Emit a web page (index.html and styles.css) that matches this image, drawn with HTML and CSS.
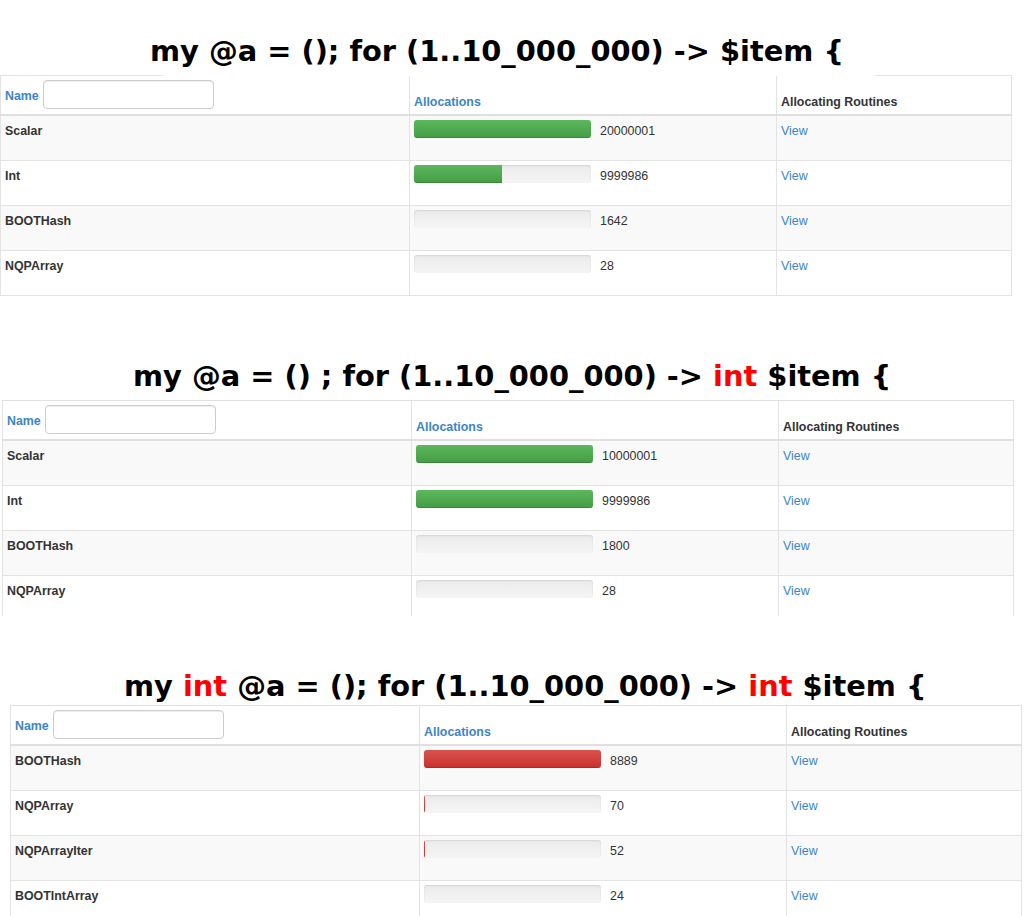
FILE: index.html
```html
<!DOCTYPE html>
<html lang="en">
<head>
<meta charset="utf-8">
<title>Allocations</title>
<link rel="stylesheet" href="styles.css">
</head>
<body>
<section class="panel panel-1">
  <h2 class="title">my @a = (); for (1..10_000_000) -&gt; $item {</h2>
  <div class="cutline"><span class="seg seg-left"></span><span class="seg seg-right"></span></div>
  <div class="gtable no-top">
    <div class="row head">
      <div class="cell"><div class="filter"><span class="link-label">Name</span><input class="filter-input" type="text"></div></div>
      <div class="cell hcell"><span class="link-label">Allocations</span></div>
      <div class="cell hcell"><span class="plain-label">Allocating Routines</span></div>
    </div>
    <div class="row odd first">
      <div class="cell"><span class="type">Scalar</span></div>
      <div class="cell"><div class="alloc"><div class="bar"><div class="fill green" style="width:100%"></div></div><span class="num">20000001</span></div></div>
      <div class="cell"><a class="view" href="#">View</a></div>
    </div>
    <div class="row">
      <div class="cell"><span class="type">Int</span></div>
      <div class="cell"><div class="alloc"><div class="bar"><div class="fill green" style="width:49.99993%"></div></div><span class="num">9999986</span></div></div>
      <div class="cell"><a class="view" href="#">View</a></div>
    </div>
    <div class="row odd">
      <div class="cell"><span class="type">BOOTHash</span></div>
      <div class="cell"><div class="alloc"><div class="bar"><div class="fill green" style="width:0.0082%"></div></div><span class="num">1642</span></div></div>
      <div class="cell"><a class="view" href="#">View</a></div>
    </div>
    <div class="row last">
      <div class="cell"><span class="type">NQPArray</span></div>
      <div class="cell"><div class="alloc"><div class="bar"><div class="fill green" style="width:0.00014%"></div></div><span class="num">28</span></div></div>
      <div class="cell"><a class="view" href="#">View</a></div>
    </div>
  </div>
</section>

<section class="panel panel-2">
  <h2 class="title">my @a = () ; for (1..10_000_000) -&gt; <span class="kw">int</span> $item {</h2>
  <div class="clip clip-2">
    <div class="gtable">
      <div class="row head">
        <div class="cell"><div class="filter"><span class="link-label">Name</span><input class="filter-input" type="text"></div></div>
        <div class="cell hcell"><span class="link-label">Allocations</span></div>
        <div class="cell hcell"><span class="plain-label">Allocating Routines</span></div>
      </div>
      <div class="row odd first">
        <div class="cell"><span class="type">Scalar</span></div>
        <div class="cell"><div class="alloc"><div class="bar"><div class="fill green" style="width:100%"></div></div><span class="num">10000001</span></div></div>
        <div class="cell"><a class="view" href="#">View</a></div>
      </div>
      <div class="row">
        <div class="cell"><span class="type">Int</span></div>
        <div class="cell"><div class="alloc"><div class="bar"><div class="fill green" style="width:99.99985%"></div></div><span class="num">9999986</span></div></div>
        <div class="cell"><a class="view" href="#">View</a></div>
      </div>
      <div class="row odd">
        <div class="cell"><span class="type">BOOTHash</span></div>
        <div class="cell"><div class="alloc"><div class="bar"><div class="fill green" style="width:0.018%"></div></div><span class="num">1800</span></div></div>
        <div class="cell"><a class="view" href="#">View</a></div>
      </div>
      <div class="row">
        <div class="cell"><span class="type">NQPArray</span></div>
        <div class="cell"><div class="alloc"><div class="bar"><div class="fill green" style="width:0.00028%"></div></div><span class="num">28</span></div></div>
        <div class="cell"><a class="view" href="#">View</a></div>
      </div>
    </div>
  </div>
</section>

<section class="panel panel-3">
  <h2 class="title">my <span class="kw">int</span> @a = (); for (1..10_000_000) -&gt; <span class="kw">int</span> $item {</h2>
  <div class="gtable">
    <div class="row head">
      <div class="cell"><div class="filter"><span class="link-label">Name</span><input class="filter-input" type="text"></div></div>
      <div class="cell hcell"><span class="link-label">Allocations</span></div>
      <div class="cell hcell"><span class="plain-label">Allocating Routines</span></div>
    </div>
    <div class="row odd first">
      <div class="cell"><span class="type">BOOTHash</span></div>
      <div class="cell"><div class="alloc"><div class="bar"><div class="fill red" style="width:100%"></div></div><span class="num">8889</span></div></div>
      <div class="cell"><a class="view" href="#">View</a></div>
    </div>
    <div class="row">
      <div class="cell"><span class="type">NQPArray</span></div>
      <div class="cell"><div class="alloc"><div class="bar"><div class="fill red" style="width:0.7875%"></div></div><span class="num">70</span></div></div>
      <div class="cell"><a class="view" href="#">View</a></div>
    </div>
    <div class="row odd">
      <div class="cell"><span class="type">NQPArrayIter</span></div>
      <div class="cell"><div class="alloc"><div class="bar"><div class="fill red" style="width:0.585%"></div></div><span class="num">52</span></div></div>
      <div class="cell"><a class="view" href="#">View</a></div>
    </div>
    <div class="row">
      <div class="cell"><span class="type">BOOTIntArray</span></div>
      <div class="cell"><div class="alloc"><div class="bar"><div class="fill red" style="width:0.27%"></div></div><span class="num">24</span></div></div>
      <div class="cell"><a class="view" href="#">View</a></div>
    </div>
  </div>
</section>
</body>
</html>
```

FILE: styles.css
```css
html {
  overflow: hidden;
  background: #fff;
}

body {
  margin: 0;
  background: #fff;
  font-family: "Liberation Sans", Arial, sans-serif;
  font-size: 12.4px;
  color: #333;
}

.title {
  margin: 0;
  height: 34px;
  font-family: "DejaVu Sans", sans-serif;
  font-weight: bold;
  font-size: 28.85px;
  line-height: 34px;
  color: #000;
  white-space: nowrap;
}

.kw {
  color: #ff0000;
}

.panel-1 {
  margin-left: 0;
}
.panel-1 .title {
  margin-top: 34px;
  margin-bottom: 7px;
  padding-left: 150px;
}

.panel-2 {
  margin-left: 2px;
}
.panel-2 .title {
  margin-top: 63px;
  margin-bottom: 7px;
  padding-left: 131px;
}

.panel-3 {
  margin-left: 10px;
}
.panel-3 .title {
  margin-top: 53px;
  margin-bottom: 2px;
  padding-left: 114px;
}

.cutline {
  display: flex;
  justify-content: space-between;
  width: 1012px;
  height: 1px;
}
.seg {
  display: block;
  height: 1px;
  background: #e3e3e3;
}
.seg-left {
  width: 163px;
}
.seg-right {
  width: 137px;
}

.clip-2 {
  height: 216px;
  overflow: hidden;
}

.gtable {
  width: 1012px;
  border-top: 1px solid #e0e0e0;
}
.gtable.no-top {
  border-top: none;
}

.row {
  display: grid;
  grid-template-columns: 409px 367px 236px;
  border-top: 1px solid #e3e3e3;
}
.row.head {
  border-top: none;
  border-bottom: 2px solid #e0e0e0;
}
.row.first {
  border-top: none;
}
.row.last {
  border-bottom: 1px solid #e3e3e3;
}
.row.odd {
  background: #f9f9f9;
}

.cell {
  box-sizing: border-box;
  border-left: 1px solid #e3e3e3;
  padding: 4px 4px 18px 4px;
  line-height: 22px;
  min-width: 0;
}
.cell:last-child {
  border-right: 1px solid #e3e3e3;
}

.head .cell {
  padding: 4px 4px 5px 4px;
  line-height: 16px;
}
.head .hcell {
  display: flex;
  align-items: flex-end;
  padding-bottom: 4px;
}

.filter {
  display: flex;
  align-items: flex-start;
  gap: 4px;
}
.filter .link-label {
  margin-top: 8px;
}

.filter-input {
  box-sizing: border-box;
  width: 171px;
  height: 29px;
  margin: 0;
  padding: 4px 8px;
  border: 1px solid #cccccc;
  border-radius: 4px;
  background: #fff;
  box-shadow: inset 0 1px 1px rgba(0, 0, 0, 0.075);
  font-family: "Liberation Sans", Arial, sans-serif;
  font-size: 12.4px;
}

.link-label {
  font-weight: bold;
  color: #3c85c6;
}
.plain-label {
  font-weight: bold;
  color: #333;
}

.type {
  font-weight: bold;
  color: #333;
}

.alloc {
  display: flex;
  align-items: flex-start;
  gap: 9px;
}

.bar {
  width: 177px;
  height: 18px;
  border-radius: 3px;
  overflow: hidden;
  background: linear-gradient(to bottom, #ebebeb, #f5f5f5);
  box-shadow: inset 0 1px 2px rgba(0, 0, 0, 0.1);
  display: flex;
}
.fill {
  height: 100%;
  box-shadow: inset 0 -1px 0 rgba(0, 0, 0, 0.15);
}
.fill.green {
  background: linear-gradient(to bottom, #5cb85c, #449d44);
}
.fill.red {
  background: linear-gradient(to bottom, #d9534f, #c9302c);
}

.num {
  color: #333;
}

.view {
  color: #3c85c6;
  text-decoration: none;
}
```
